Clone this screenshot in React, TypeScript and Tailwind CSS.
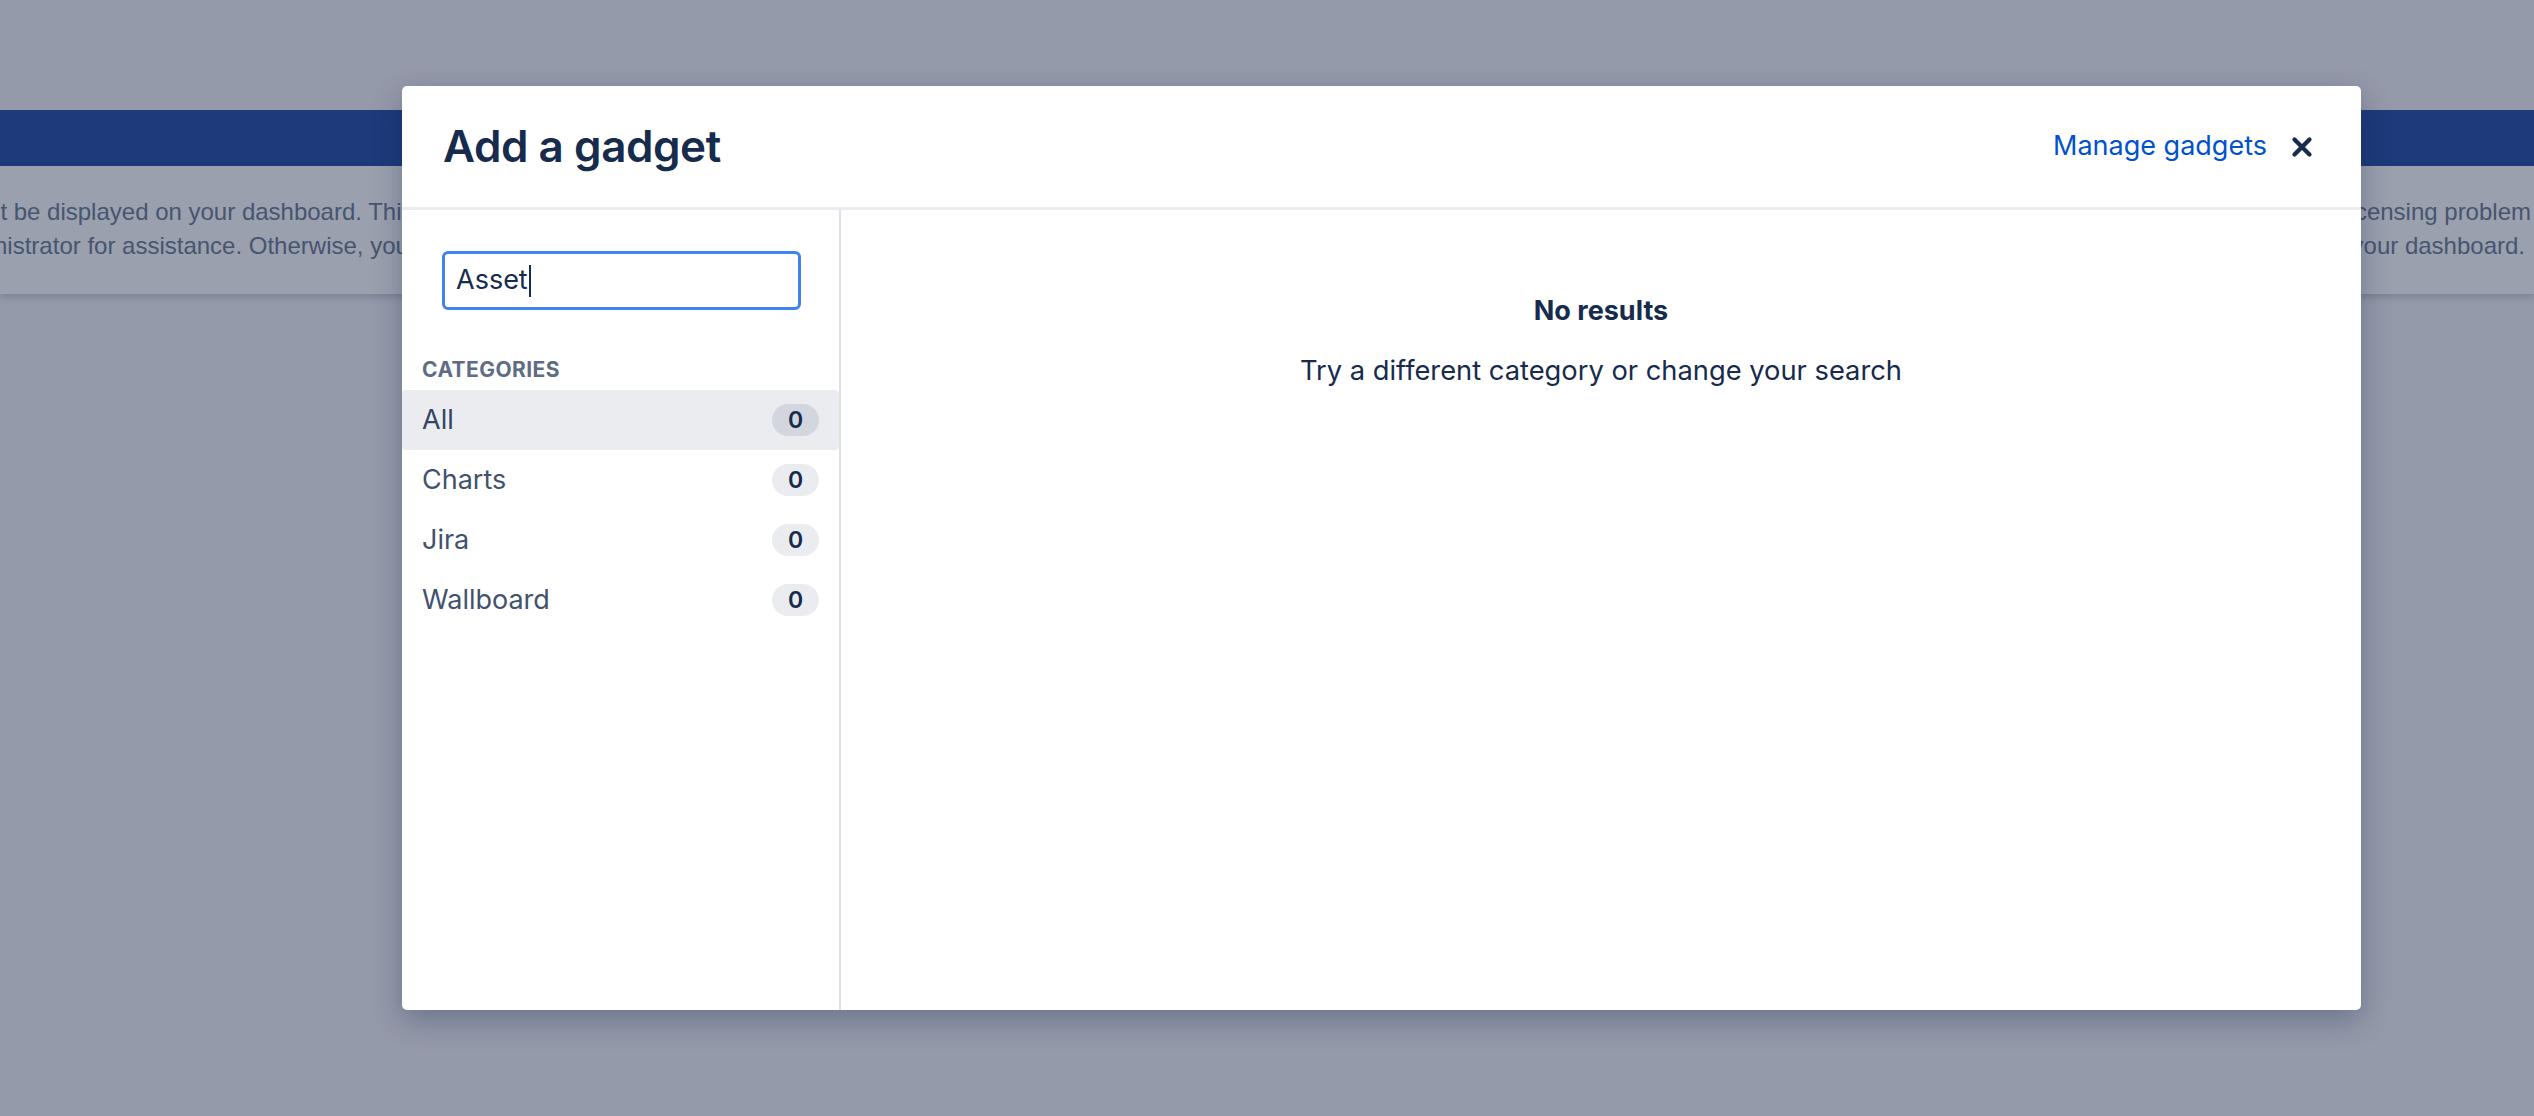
import React from 'react';
import { X } from 'lucide-react';

const categories = [
    { name: 'All', count: 0, active: true },
    { name: 'Charts', count: 0 },
    { name: 'Jira', count: 0 },
    { name: 'Wallboard', count: 0 },
];

const Dashboard: React.FC = () => (
    <div className="pt-[110px]">
        <div className="h-[56px] bg-[#1e3a7a]" />
        <div className="h-[128px] overflow-hidden bg-[#9ba0ae] pt-[29px] text-[24px] leading-[34px] text-[#465570] shadow-[0_4px_6px_rgba(60,70,95,0.25)] font-['Liberation_Sans',Arial,sans-serif]">
            <div className="flex justify-between whitespace-nowrap">
                <span className="-ml-[65px]">cannot be displayed on your dashboard. This may be because the gadget has a</span>
                <span className="mr-[3px]">configuration or licensing problem</span>
            </div>
            <div className="flex justify-between whitespace-nowrap">
                <span className="-ml-[58px]">administrator for assistance. Otherwise, you can remove it</span>
                <span className="mr-[9px]">from your dashboard.</span>
            </div>
        </div>
    </div>
);

const AddGadgetDialog: React.FC = () => (
    <div className="absolute left-[402px] top-[86px] flex h-[924px] w-[1959px] flex-col rounded-[5px] bg-white shadow-[0_10px_30px_rgba(9,30,66,0.3)] font-['Inter','Noto_Sans',sans-serif] text-[#172b4d]">
        <div className="flex h-[124px] shrink-0 items-center justify-between border-b-[3px] border-[#ebecf0] pl-[41px] pr-[44px]">
            <h1 className="pb-[2px] text-[44px] font-semibold tracking-[-0.01em]">Add a gadget</h1>
            <div className="flex items-center gap-[20px]">
                <a className="text-[27px] text-[#0052cc]">Manage gadgets</a>
                <X className="h-[30px] w-[30px]" strokeWidth={3.4} />
            </div>
        </div>
        <div className="flex flex-1">
            <aside className="w-[439px] shrink-0 border-r-2 border-[#dfe1e6] pt-[41px]">
                <div className="ml-[40px] mr-[38px] flex h-[59px] items-center rounded-[6px] border-[3px] border-[#3d84ef] pl-[11px] text-[27px]">
                    <span>Asset</span>
                    <span className="ml-[1px] h-[32px] w-[2px] bg-[#172b4d]" />
                </div>
                <div className="mb-[8px] mt-[48px] pl-[20px] text-[21px] font-bold leading-[24px] tracking-[0.02em] text-[#5e6c84]">
                    CATEGORIES
                </div>
                {categories.map((c) => (
                    <div
                        key={c.name}
                        className={`flex h-[60px] items-center justify-between rounded-[4px] pl-[20px] pr-[20px] text-[27px] text-[#42526e] ${c.active ? 'bg-[#ebecf0] text-[#344563]' : ''}`}
                    >
                        <span>{c.name}</span>
                        <span className={`flex h-[32px] w-[47px] items-center justify-center rounded-full text-[23px] font-semibold text-[#172b4d] ${c.active ? 'bg-[#d3d6de]' : 'bg-[#ebecf0]'}`}>
                            {c.count}
                        </span>
                    </div>
                ))}
            </aside>
            <main className="flex flex-1 flex-col items-center pt-[83px]">
                <div className="text-[27px] font-bold leading-[36px]">No results</div>
                <div className="mt-[24px] text-[27.3px] leading-[36px]">Try a different category or change your search</div>
            </main>
        </div>
    </div>
);

const App: React.FC = () => (
    <div className="relative h-[1116px] w-[2534px] overflow-hidden bg-[#959aaa]">
        <Dashboard />
        <AddGadgetDialog />
    </div>
);

export default App;
